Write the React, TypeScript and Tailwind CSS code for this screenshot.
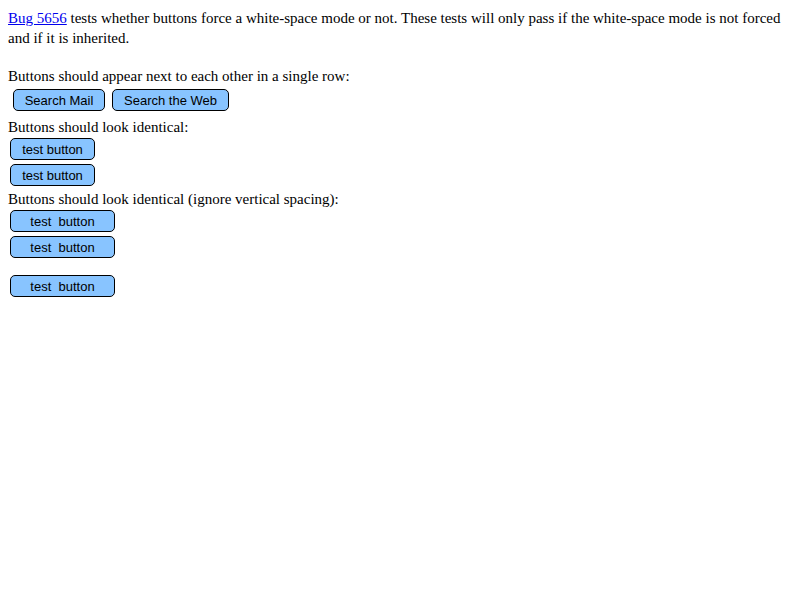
export default function App() {
  const btn =
    "h-[22px] rounded-[5px] border border-black bg-[#88c4ff] text-[13px] leading-none text-black font-['Liberation_Sans',Arial,sans-serif] whitespace-pre flex items-center justify-center";

  return (
    <div className="min-h-screen bg-white px-2 pt-2 text-[15px] leading-[20px] text-black font-['Liberation_Serif','Times_New_Roman',serif]">
      <p>
        <a href="#" className="text-[#0000ee] underline">
          Bug 5656
        </a>{" "}
        tests whether buttons force a white-space mode or not. These tests will only pass if the white-space mode is not forced
        and if it is inherited.
      </p>

      <p className="mt-[18px]">Buttons should appear next to each other in a single row:</p>
      <div className="mt-[3px] flex gap-[7px] pl-[5px]">
        <button className={`${btn} w-[92px]`}>Search Mail</button>
        <button className={`${btn} w-[117px]`}>Search the Web</button>
      </div>

      <p className="mt-[6px]">Buttons should look identical:</p>
      <div className="mt-[1px] flex flex-col gap-[4px] pl-[2px]">
        <button className={`${btn} w-[85px]`}>test button</button>
        <button className={`${btn} w-[85px]`}>test button</button>
      </div>

      <p className="mt-[3px]">Buttons should look identical (ignore vertical spacing):</p>
      <div className="mt-[1px] flex flex-col pl-[2px]">
        <button className={`${btn} w-[105px]`}>test  button</button>
        <button className={`${btn} mt-[4px] w-[105px]`}>test  button</button>
        <button className={`${btn} mt-[17px] w-[105px]`}>test  button</button>
      </div>
    </div>
  );
}
